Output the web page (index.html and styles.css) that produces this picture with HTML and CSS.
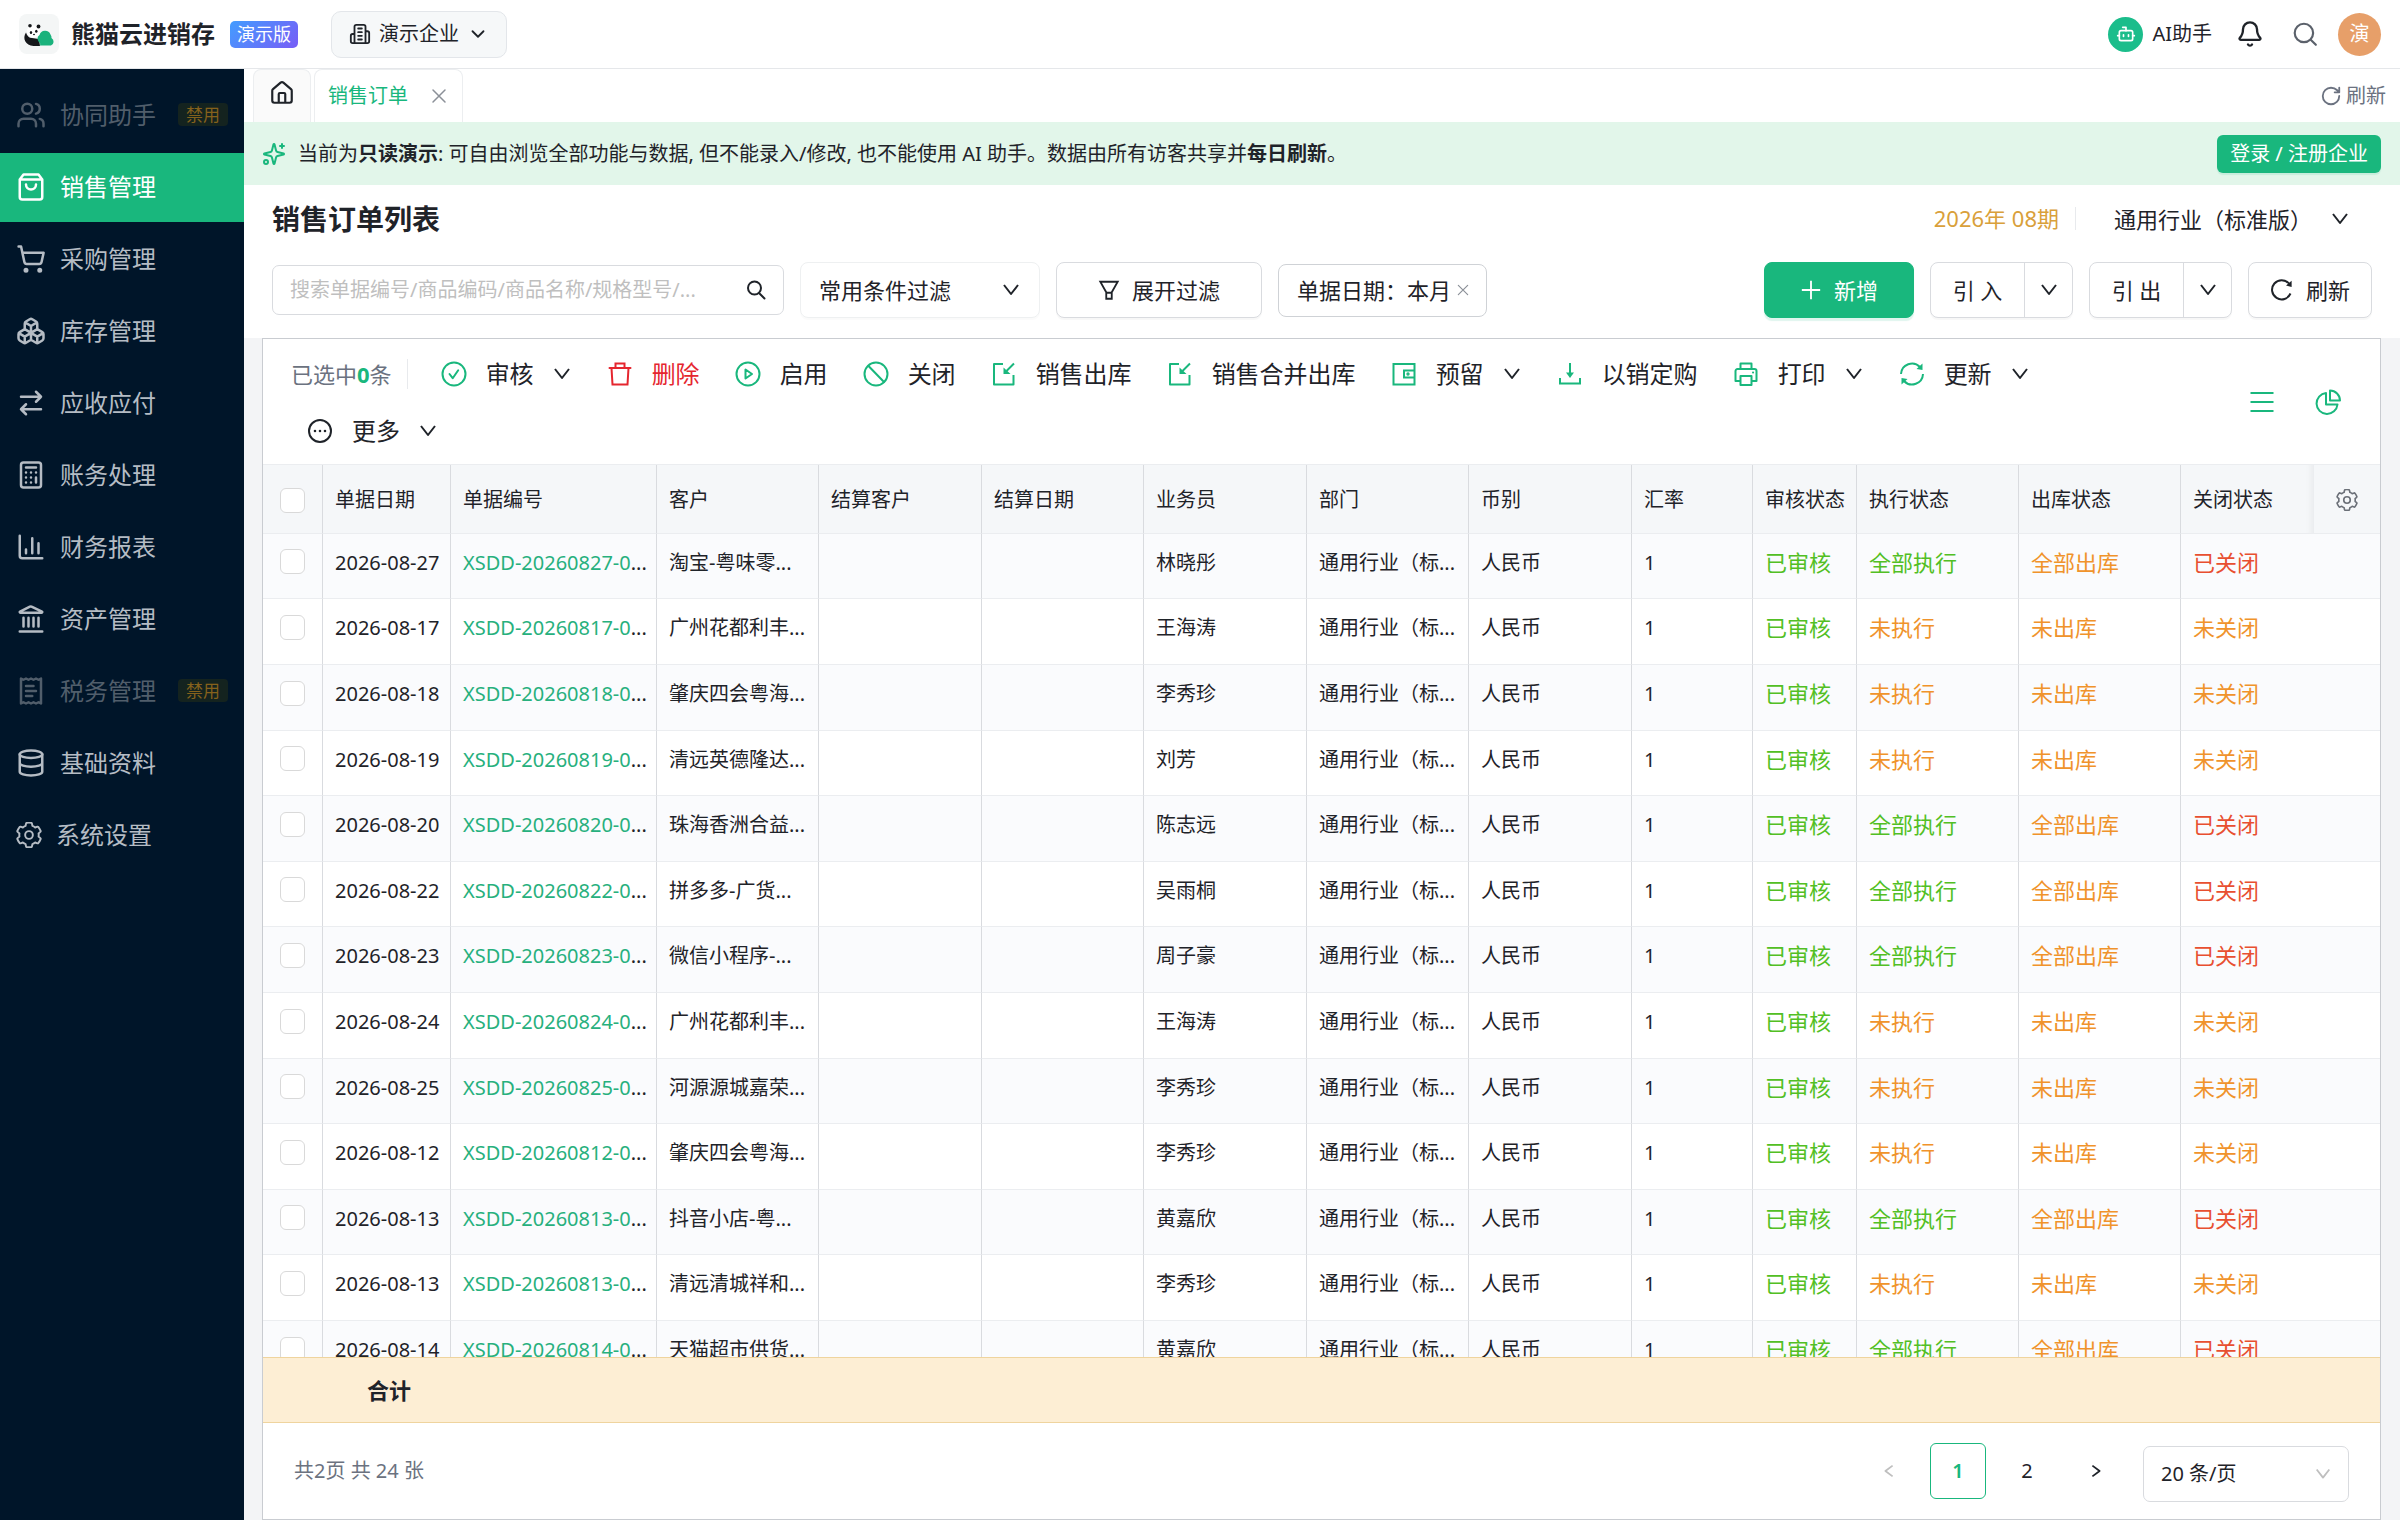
FILE: index.html
```html
<!DOCTYPE html>
<html lang="zh-CN">
<head>
<meta charset="utf-8">
<title>销售订单列表</title>
<link rel="stylesheet" href="styles.css">
</head>
<body>
<svg class="sprite" aria-hidden="true">
  <symbol id="users" viewBox="0 0 24 24"><path d="M16 21v-2a4 4 0 0 0-4-4H6a4 4 0 0 0-4 4v2M22 21v-2a4 4 0 0 0-3-3.87M16 3.13a4 4 0 0 1 0 7.75"/><circle cx="9" cy="7" r="4"/></symbol>
  <symbol id="bag" viewBox="0 0 24 24"><path d="M6 2 3 6v14a2 2 0 0 0 2 2h14a2 2 0 0 0 2-2V6l-3-4ZM3 6h18M16 10a4 4 0 0 1-8 0"/></symbol>
  <symbol id="cart" viewBox="0 0 24 24"><circle cx="8" cy="21" r="1"/><circle cx="19" cy="21" r="1"/><path d="M2.05 2.05h2l2.66 12.42a2 2 0 0 0 2 1.58h9.78a2 2 0 0 0 1.95-1.57l1.65-7.43H5.12"/></symbol>
  <symbol id="boxes" viewBox="0 0 24 24"><path d="M2.97 12.92A2 2 0 0 0 2 14.63v3.24a2 2 0 0 0 .97 1.71l3 1.8a2 2 0 0 0 2.06 0L12 19v-5.5l-5-3-4.03 2.42ZM7 16.5l-4.74-2.85M7 16.5l5-3M7 16.5v5.17M12 13.5V19l3.97 2.38a2 2 0 0 0 2.06 0l3-1.8a2 2 0 0 0 .97-1.71v-3.24a2 2 0 0 0-.97-1.71L17 10.5l-5 3ZM17 16.5l-5-3M17 16.5l4.74-2.85M17 16.5v5.17M7.97 4.42A2 2 0 0 0 7 6.13v4.37l5 3 5-3V6.13a2 2 0 0 0-.97-1.71l-3-1.8a2 2 0 0 0-2.06 0l-3 1.8ZM12 8 7.26 5.15M12 8l4.74-2.85M12 13.5V8"/></symbol>
  <symbol id="swap" viewBox="0 0 24 24"><path d="m16 3 4 4-4 4M20 7H4M8 21l-4-4 4-4M4 17h16"/></symbol>
  <symbol id="calc" viewBox="0 0 24 24"><rect x="4" y="2" width="16" height="20" rx="2"/><path d="M8 6h8M16 14v4M16 10h.01M12 10h.01M8 10h.01M12 14h.01M8 14h.01M12 18h.01M8 18h.01"/></symbol>
  <symbol id="chart" viewBox="0 0 24 24"><path d="M3 3v16a2 2 0 0 0 2 2h16M18 17V9M13 17V5M8 17v-3"/></symbol>
  <symbol id="bank" viewBox="0 0 24 24"><path d="M10 18v-7M11.12 2.198a2 2 0 0 1 1.76.006l7.866 3.847c.476.233.31.949-.22.949H3.474c-.53 0-.695-.716-.22-.949zM14 18v-7M18 18v-7M3 22h18M6 18v-7"/></symbol>
  <symbol id="receipt" viewBox="0 0 24 24"><path d="M4 2v20l2-1 2 1 2-1 2 1 2-1 2 1 2-1 2 1V2l-2 1-2-1-2 1-2-1-2 1-2-1-2 1ZM14 8H8M16 12H8M13 16H8"/></symbol>
  <symbol id="database" viewBox="0 0 24 24"><ellipse cx="12" cy="5" rx="9" ry="3"/><path d="M3 5V19A9 3 0 0 0 21 19V5M3 12A9 3 0 0 0 21 12"/></symbol>
  <symbol id="gear" viewBox="40 40 944 944"><path stroke-width="70" d="M924.8 625.7l-65.5-56c3.1-19 4.7-38.4 4.7-57.8s-1.6-38.8-4.7-57.8l65.5-56a32 32 0 0 0 9.3-35.2l-.9-2.6a443.7 443.7 0 0 0-79.7-137.9l-1.8-2.1a32.1 32.1 0 0 0-35.1-9.5l-81.3 28.9c-30-24.6-63.5-44-99.7-57.6l-15.7-85a32 32 0 0 0-25.8-25.7l-2.7-.5c-52.1-9.4-106.9-9.4-159 0l-2.7.5a32 32 0 0 0-25.8 25.7l-15.8 85.4a351.9 351.9 0 0 0-99 57.4l-81.9-29.1a32 32 0 0 0-35.1 9.5l-1.8 2.1a446 446 0 0 0-79.7 137.9l-.9 2.6c-4.5 12.5-.8 26.5 9.3 35.2l66.3 56.6c-3.1 18.8-4.6 38-4.6 57.1 0 19.2 1.5 38.4 4.6 57.1L99 625.5a32 32 0 0 0-9.3 35.2l.9 2.6c18.1 50.4 44.9 96.9 79.7 137.9l1.8 2.1a32.1 32.1 0 0 0 35.1 9.5l81.9-29.1c29.8 24.5 63.1 43.9 99 57.4l15.8 85.4a32 32 0 0 0 25.8 25.7l2.7.5a449.4 449.4 0 0 0 159 0l2.7-.5a32 32 0 0 0 25.8-25.7l15.7-85a350 350 0 0 0 99.7-57.6l81.3 28.9a32 32 0 0 0 35.1-9.5l1.8-2.1c34.8-41.1 61.6-87.5 79.7-137.9l.9-2.6c4.5-12.3.8-26.3-9.3-35z"/><circle cx="512" cy="512" r="140" stroke-width="70"/></symbol>
  <symbol id="building" viewBox="0 0 24 24"><path d="M6 22V4a2 2 0 0 1 2-2h8a2 2 0 0 1 2 2v18ZM6 12H4a2 2 0 0 0-2 2v6a2 2 0 0 0 2 2h2M18 9h2a2 2 0 0 1 2 2v9a2 2 0 0 1-2 2h-2M10 6h4M10 10h4M10 14h4M10 18h4"/></symbol>
  <symbol id="chevron" viewBox="0 0 24 24"><path d="m6 9 6 6 6-6"/></symbol>
  <symbol id="home" viewBox="0 0 24 24"><path d="M15 21v-8a1 1 0 0 0-1-1h-4a1 1 0 0 0-1 1v8M3 10a2 2 0 0 1 .709-1.528l7-5.999a2 2 0 0 1 2.582 0l7 5.999A2 2 0 0 1 21 10v9a2 2 0 0 1-2 2H5a2 2 0 0 1-2-2z"/></symbol>
  <symbol id="close" viewBox="0 0 24 24"><path d="M4 4l16 16M20 4 4 20"/></symbol>
  <symbol id="sparkles" viewBox="0 0 24 24"><path d="M9.937 15.5A2 2 0 0 0 8.5 14.063l-6.135-1.582a.5.5 0 0 1 0-.962L8.5 9.936A2 2 0 0 0 9.937 8.5l1.582-6.135a.5.5 0 0 1 .963 0L14.063 8.5A2 2 0 0 0 15.5 9.937l6.135 1.581a.5.5 0 0 1 0 .964L15.5 14.063a2 2 0 0 0-1.437 1.437l-1.582 6.135a.5.5 0 0 1-.963 0zM20 2v4M22 4h-4"/><circle cx="4" cy="20" r="2"/></symbol>
  <symbol id="bot" viewBox="0 0 24 24"><path d="M12 8V4H8M2 14h2M20 14h2M15 13v2M9 13v2"/><rect x="4" y="8" width="16" height="12" rx="2"/></symbol>
  <symbol id="bell" viewBox="0 0 24 24"><path d="M10.268 21a2 2 0 0 0 3.464 0M3.262 15.326A1 1 0 0 0 4 17h16a1 1 0 0 0 .74-1.673C19.41 13.956 18 12.499 18 8A6 6 0 0 0 6 8c0 4.499-1.411 5.956-2.738 7.326"/></symbol>
  <symbol id="search" viewBox="0 0 24 24"><circle cx="11" cy="11" r="8.5"/><path d="m17.5 17.5 4.5 4.5"/></symbol>
  <symbol id="magnify" viewBox="0 0 20 20"><circle cx="8.500" cy="8" r="6.500"/><path d="m13 13 5.500 5.500"/></symbol>
  <symbol id="rotate" viewBox="0 0 24 24"><path d="M21 12a9 9 0 1 1-9-9c2.52 0 4.93 1 6.74 2.74L21 8M21 3v5h-5"/></symbol>
  <symbol id="down" viewBox="0 0 20 20"><path stroke-linecap="butt" d="m3 5 7 9 7-9"/></symbol>
  <symbol id="left" viewBox="0 0 20 20"><path stroke-linecap="butt" d="M14 4 6 10l8 6"/></symbol>
  <symbol id="right" viewBox="0 0 20 20"><path stroke-linecap="butt" d="m6 4 8 6-8 6"/></symbol>
  <symbol id="filter" viewBox="0 0 24 24"><path stroke-linejoin="miter" d="M2.5 3h19L15 14.500V21.500H9V14.500ZM9 15h6"/></symbol>
  <symbol id="plus" viewBox="0 0 24 24"><path stroke-linecap="butt" d="M12 2v20M2 12h20"/></symbol>
  <symbol id="reload" viewBox="0 0 24 24"><path stroke-linecap="butt" d="M20.500 15.500A9.600 9.600 0 1 1 19 5.600"/><path fill="currentColor" stroke="none" d="M21.600 2.800v6.100l-5.600-1.300Z"/></symbol>
  <symbol id="t-check" viewBox="0 0 28 28"><circle cx="14" cy="14" r="11.500"/><path d="m9.500 14 3.200 4.200 5.500-8"/></symbol>
  <symbol id="t-trash" viewBox="0 0 28 28"><path stroke-linejoin="miter" d="M3.500 8h21M9.500 8V3.500h9V8M5.500 8l1 16.500h15l1-16.500"/></symbol>
  <symbol id="t-play" viewBox="0 0 28 28"><circle cx="14" cy="14" r="11.500"/><path d="M11.500 9.500v9l6.500-4.500Z"/></symbol>
  <symbol id="t-stop" viewBox="0 0 28 28"><circle cx="14" cy="14" r="11.500"/><path d="m6.500 6 15.500 16"/></symbol>
  <symbol id="t-import" viewBox="0 0 28 28"><path stroke-linecap="butt" d="M13 4H4v20.500h19.500V15M24 3.500l-7.500 7.500"/><path fill="currentColor" stroke="none" d="M13.500 7.500v6.500H20.500Z"/></symbol>
  <symbol id="t-wallet" viewBox="0 0 28 28"><path stroke-linejoin="miter" d="M3.500 4h21v20.500h-21ZM24.500 10.500H14v7h10.500"/><circle cx="18" cy="14" r=".7"/></symbol>
  <symbol id="t-download" viewBox="0 0 28 28"><path stroke-linecap="butt" stroke-linejoin="miter" d="M14 3v11M4 18v5.500h20V18"/><path fill="currentColor" stroke="none" d="M10 12.500h8L14 18Z"/></symbol>
  <symbol id="t-print" viewBox="0 0 28 28"><path d="M8.500 9V3.500h11V9M8.500 21H3.500V11a2 2 0 0 1 2-2h17a2 2 0 0 1 2 2v10h-5M8.500 16h11v9h-11ZM21 12.500h.1"/></symbol>
  <symbol id="t-sync" viewBox="0 0 28 28"><path stroke-linecap="butt" d="M3 14A11 11 0 0 1 22 7M25 14A11 11 0 0 1 6 21"/><path fill="currentColor" stroke="none" d="M24.500 3.500V10l-6-1ZM3.500 24.500V18l6 1Z"/></symbol>
  <symbol id="t-more" viewBox="0 0 28 28"><circle cx="14" cy="14" r="11"/><path stroke-width="2.600" d="M9 14h.01M14 14h.01M19 14h.01"/></symbol>
  <symbol id="t-menu" viewBox="0 0 28 28"><path stroke-linecap="butt" d="M2.500 5h23M2.500 14h23M2.500 23h23"/></symbol>
  <symbol id="t-pie" viewBox="0 0 28 28"><path d="M12 5a10.500 10.500 0 1 0 11.500 11.500H12ZM16 2.500V12.500h10A10 10 0 0 0 16 2.500Z"/></symbol>
  <symbol id="panda" viewBox="0 0 40 40"><path fill="#15171a" stroke="none" d="M7 18.500c-4 6-.5 13 7.500 13.500h6.500l-1-7-7-1c-3 0-5-2-6-5.500Z"/><path fill="#1ab27c" stroke="none" d="M20.500 31.500c1.500-1 .5-3-1-4a4.500 4.500 0 0 1 1-6.500 5.800 5.800 0 0 1 11-.5 4.500 4.500 0 0 1 1 3.500 4.200 4.200 0 0 1-.5 7.500Z"/><ellipse cx="14.500" cy="17.500" rx="6.600" ry="6" fill="#fff" stroke="none"/><g fill="#15171a" stroke="none"><circle cx="11" cy="11.800" r="1.800"/><circle cx="19.500" cy="12.500" r="1.900"/><ellipse cx="12" cy="18.500" rx="1.200" ry="1.600"/><ellipse cx="17.300" cy="17.300" rx="1.200" ry="1.500"/><ellipse cx="15" cy="20.500" rx="1" ry=".7"/></g></symbol>
</svg>

<header class="topbar">
  <svg class="logo"><use href="#panda"/></svg>
  <strong class="brand">熊猫云进销存</strong>
  <span class="edition">演示版</span>
  <button class="company" type="button"><svg class="i22"><use href="#building"/></svg>演示企业<svg class="i22"><use href="#chevron"/></svg></button>
  <div class="top-actions">
    <button class="ai" type="button"><span class="ai-dot"><svg class="i20"><use href="#bot"/></svg></span>AI助手</button>
    <button class="plain" type="button" aria-label="通知"><svg class="i28"><use href="#bell"/></svg></button>
    <button class="plain muted" type="button" aria-label="搜索"><svg class="i26"><use href="#search"/></svg></button>
    <button class="avatar" type="button">演</button>
  </div>
</header>

<div class="shell">
  <nav class="sidebar">
    <a href="#" class="disabled"><svg class="i30"><use href="#users"/></svg><span>协同助手</span><em>禁用</em></a>
    <a href="#" class="active"><svg class="i30"><use href="#bag"/></svg><span>销售管理</span></a>
    <a href="#"><svg class="i30"><use href="#cart"/></svg><span>采购管理</span></a>
    <a href="#"><svg class="i30"><use href="#boxes"/></svg><span>库存管理</span></a>
    <a href="#"><svg class="i30"><use href="#swap"/></svg><span>应收应付</span></a>
    <a href="#"><svg class="i30"><use href="#calc"/></svg><span>账务处理</span></a>
    <a href="#"><svg class="i30"><use href="#chart"/></svg><span>财务报表</span></a>
    <a href="#"><svg class="i30"><use href="#bank"/></svg><span>资产管理</span></a>
    <a href="#" class="disabled"><svg class="i30"><use href="#receipt"/></svg><span>税务管理</span><em>禁用</em></a>
    <a href="#"><svg class="i30"><use href="#database"/></svg><span>基础资料</span></a>
    <a href="#"><svg class="i26"><use href="#gear"/></svg><span>系统设置</span></a>
  </nav>

  <main class="main">
    <div class="tabs">
      <a href="#" class="tab-home" aria-label="首页"><svg class="i26"><use href="#home"/></svg></a>
      <div class="tab"><a href="#">销售订单</a><button class="plain" type="button" aria-label="关闭"><svg class="i18"><use href="#close"/></svg></button></div>
      <button class="tab-refresh" type="button"><svg class="i22"><use href="#rotate"/></svg>刷新</button>
    </div>

    <div class="notice">
      <svg class="i24"><use href="#sparkles"/></svg>
      <p>当前为<b>只读演示</b>: 可自由浏览全部功能与数据, 但不能录入/修改, 也不能使用 AI 助手。数据由所有访客共享并<b>每日刷新</b>。</p>
      <button class="login" type="button">登录 / 注册企业</button>
    </div>

    <section class="head">
      <div class="head-row">
        <h1>销售订单列表</h1>
        <span class="period">2026年 08期</span>
        <label class="industry"><select aria-label="行业"><option>通用行业（标准版）</option></select><svg class="i20"><use href="#down"/></svg></label>
      </div>
      <div class="filters">
        <label class="search"><input type="text" aria-label="搜索" placeholder="搜索单据编号/商品编码/商品名称/规格型号/..."><svg class="i20"><use href="#magnify"/></svg></label>
        <label class="preset"><select aria-label="常用条件过滤"><option>常用条件过滤</option></select><svg class="i20"><use href="#down"/></svg></label>
        <button class="btn expand" type="button"><svg class="i22"><use href="#filter"/></svg>展开过滤</button>
        <span class="chip">单据日期：本月<button class="plain" type="button" aria-label="移除"><svg class="i14"><use href="#close"/></svg></button></span>
        <div class="actions">
          <button class="btn primary" type="button"><svg class="i22"><use href="#plus"/></svg>新增</button>
          <div class="split"><button type="button">引 入</button><button type="button" aria-label="更多引入"><svg class="i20"><use href="#down"/></svg></button></div>
          <div class="split"><button type="button">引 出</button><button type="button" aria-label="更多引出"><svg class="i20"><use href="#down"/></svg></button></div>
          <button class="btn reload" type="button"><svg class="i24"><use href="#reload"/></svg>刷新</button>
        </div>
      </div>
    </section>

    <div class="body">
      <section class="card">
        <div class="toolbar">
          <div class="tools">
            <span class="count">已选中<b>0</b>条</span>
            <button type="button"><svg class="i28"><use href="#t-check"/></svg>审核<svg class="i20"><use href="#down"/></svg></button>
            <button type="button" class="danger"><svg class="i28"><use href="#t-trash"/></svg>删除</button>
            <button type="button"><svg class="i28"><use href="#t-play"/></svg>启用</button>
            <button type="button"><svg class="i28"><use href="#t-stop"/></svg>关闭</button>
            <button type="button"><svg class="i28"><use href="#t-import"/></svg>销售出库</button>
            <button type="button"><svg class="i28"><use href="#t-import"/></svg>销售合并出库</button>
            <button type="button"><svg class="i28"><use href="#t-wallet"/></svg>预留<svg class="i20"><use href="#down"/></svg></button>
            <button type="button"><svg class="i28"><use href="#t-download"/></svg>以销定购</button>
            <button type="button"><svg class="i28"><use href="#t-print"/></svg>打印<svg class="i20"><use href="#down"/></svg></button>
            <button type="button"><svg class="i28"><use href="#t-sync"/></svg>更新<svg class="i20"><use href="#down"/></svg></button>
            <button type="button" class="more"><svg class="i28"><use href="#t-more"/></svg>更多<svg class="i20"><use href="#down"/></svg></button>
          </div>
          <div class="views">
            <button class="plain" type="button" aria-label="列表"><svg class="i28"><use href="#t-menu"/></svg></button>
            <button class="plain" type="button" aria-label="图表"><svg class="i28"><use href="#t-pie"/></svg></button>
          </div>
        </div>

        <div class="table-wrap">
          <table>
            <colgroup><col class="c-check"><col class="c-date"><col class="c-no"><col class="c-std"><col class="c-wide"><col class="c-std"><col class="c-wide"><col class="c-std"><col class="c-wide"><col class="c-rate"><col class="c-audit"><col class="c-std"><col class="c-std"><col><col class="c-set"></colgroup>
            <thead><tr><th><input type="checkbox" aria-label="全选"></th><th>单据日期</th><th>单据编号</th><th>客户</th><th>结算客户</th><th>结算日期</th><th>业务员</th><th>部门</th><th>币别</th><th>汇率</th><th>审核状态</th><th>执行状态</th><th>出库状态</th><th>关闭状态</th><th><button class="plain" type="button" aria-label="列设置"><svg class="i22"><use href="#gear"/></svg></button></th></tr></thead>
            <tbody>
              <tr><td><input type="checkbox" aria-label="选择"></td><td>2026-08-27</td><td><a href="#">XSDD-20260827-0</a>...</td><td>淘宝-粤味零...</td><td></td><td></td><td>林晓彤</td><td>通用行业（标...</td><td>人民币</td><td>1</td><td class="ok">已审核</td><td class="ok">全部执行</td><td class="warn">全部出库</td><td class="bad" colspan="2">已关闭</td></tr>
              <tr><td><input type="checkbox" aria-label="选择"></td><td>2026-08-17</td><td><a href="#">XSDD-20260817-0</a>...</td><td>广州花都利丰...</td><td></td><td></td><td>王海涛</td><td>通用行业（标...</td><td>人民币</td><td>1</td><td class="ok">已审核</td><td class="warn">未执行</td><td class="warn">未出库</td><td class="warn" colspan="2">未关闭</td></tr>
              <tr><td><input type="checkbox" aria-label="选择"></td><td>2026-08-18</td><td><a href="#">XSDD-20260818-0</a>...</td><td>肇庆四会粤海...</td><td></td><td></td><td>李秀珍</td><td>通用行业（标...</td><td>人民币</td><td>1</td><td class="ok">已审核</td><td class="warn">未执行</td><td class="warn">未出库</td><td class="warn" colspan="2">未关闭</td></tr>
              <tr><td><input type="checkbox" aria-label="选择"></td><td>2026-08-19</td><td><a href="#">XSDD-20260819-0</a>...</td><td>清远英德隆达...</td><td></td><td></td><td>刘芳</td><td>通用行业（标...</td><td>人民币</td><td>1</td><td class="ok">已审核</td><td class="warn">未执行</td><td class="warn">未出库</td><td class="warn" colspan="2">未关闭</td></tr>
              <tr><td><input type="checkbox" aria-label="选择"></td><td>2026-08-20</td><td><a href="#">XSDD-20260820-0</a>...</td><td>珠海香洲合益...</td><td></td><td></td><td>陈志远</td><td>通用行业（标...</td><td>人民币</td><td>1</td><td class="ok">已审核</td><td class="ok">全部执行</td><td class="warn">全部出库</td><td class="bad" colspan="2">已关闭</td></tr>
              <tr><td><input type="checkbox" aria-label="选择"></td><td>2026-08-22</td><td><a href="#">XSDD-20260822-0</a>...</td><td>拼多多-广货...</td><td></td><td></td><td>吴雨桐</td><td>通用行业（标...</td><td>人民币</td><td>1</td><td class="ok">已审核</td><td class="ok">全部执行</td><td class="warn">全部出库</td><td class="bad" colspan="2">已关闭</td></tr>
              <tr><td><input type="checkbox" aria-label="选择"></td><td>2026-08-23</td><td><a href="#">XSDD-20260823-0</a>...</td><td>微信小程序-...</td><td></td><td></td><td>周子豪</td><td>通用行业（标...</td><td>人民币</td><td>1</td><td class="ok">已审核</td><td class="ok">全部执行</td><td class="warn">全部出库</td><td class="bad" colspan="2">已关闭</td></tr>
              <tr><td><input type="checkbox" aria-label="选择"></td><td>2026-08-24</td><td><a href="#">XSDD-20260824-0</a>...</td><td>广州花都利丰...</td><td></td><td></td><td>王海涛</td><td>通用行业（标...</td><td>人民币</td><td>1</td><td class="ok">已审核</td><td class="warn">未执行</td><td class="warn">未出库</td><td class="warn" colspan="2">未关闭</td></tr>
              <tr><td><input type="checkbox" aria-label="选择"></td><td>2026-08-25</td><td><a href="#">XSDD-20260825-0</a>...</td><td>河源源城嘉荣...</td><td></td><td></td><td>李秀珍</td><td>通用行业（标...</td><td>人民币</td><td>1</td><td class="ok">已审核</td><td class="warn">未执行</td><td class="warn">未出库</td><td class="warn" colspan="2">未关闭</td></tr>
              <tr><td><input type="checkbox" aria-label="选择"></td><td>2026-08-12</td><td><a href="#">XSDD-20260812-0</a>...</td><td>肇庆四会粤海...</td><td></td><td></td><td>李秀珍</td><td>通用行业（标...</td><td>人民币</td><td>1</td><td class="ok">已审核</td><td class="warn">未执行</td><td class="warn">未出库</td><td class="warn" colspan="2">未关闭</td></tr>
              <tr><td><input type="checkbox" aria-label="选择"></td><td>2026-08-13</td><td><a href="#">XSDD-20260813-0</a>...</td><td>抖音小店-粤...</td><td></td><td></td><td>黄嘉欣</td><td>通用行业（标...</td><td>人民币</td><td>1</td><td class="ok">已审核</td><td class="ok">全部执行</td><td class="warn">全部出库</td><td class="bad" colspan="2">已关闭</td></tr>
              <tr><td><input type="checkbox" aria-label="选择"></td><td>2026-08-13</td><td><a href="#">XSDD-20260813-0</a>...</td><td>清远清城祥和...</td><td></td><td></td><td>李秀珍</td><td>通用行业（标...</td><td>人民币</td><td>1</td><td class="ok">已审核</td><td class="warn">未执行</td><td class="warn">未出库</td><td class="warn" colspan="2">未关闭</td></tr>
              <tr><td><input type="checkbox" aria-label="选择"></td><td>2026-08-14</td><td><a href="#">XSDD-20260814-0</a>...</td><td>天猫超市供货...</td><td></td><td></td><td>黄嘉欣</td><td>通用行业（标...</td><td>人民币</td><td>1</td><td class="ok">已审核</td><td class="ok">全部执行</td><td class="warn">全部出库</td><td class="bad" colspan="2">已关闭</td></tr>
            </tbody>
          </table>
        </div>

        <div class="summary">合计</div>

        <footer class="pager">
          <span class="total">共2页 共 24 张</span>
          <button class="page off" type="button" aria-label="上一页"><svg class="i18"><use href="#left"/></svg></button>
          <button class="page current" type="button">1</button>
          <button class="page" type="button">2</button>
          <button class="page" type="button" aria-label="下一页"><svg class="i18"><use href="#right"/></svg></button>
          <label class="size"><select aria-label="每页条数"><option>20 条/页</option></select><svg class="i18"><use href="#down"/></svg></label>
        </footer>
      </section>
    </div>
  </main>
</div>
</body>
</html>
```
FILE: styles.css
```css
:root {
  --green: #19b77d;
  --ink: #1f2329;
  --muted: #6b7280;
  --line: #d9dbdf;
}

* { box-sizing: border-box; }

body {
  margin: 0;
  height: 100vh;
  display: flex;
  flex-direction: column;
  overflow: hidden;
  font: 20px/28px "Noto Sans", "Noto Sans CJK SC", sans-serif;
  color: var(--ink);
  background: #fff;
}

button, input, select { font: inherit; color: inherit; margin: 0; }
button { cursor: pointer; padding: 0; border: 0; background: none; white-space: nowrap; }
a { color: inherit; text-decoration: none; }
label { cursor: pointer; }

svg {
  flex: none;
  fill: none;
  stroke: currentColor;
  stroke-width: 2;
  stroke-linecap: round;
  stroke-linejoin: round;
}
.sprite { display: none; }
.i14 { width: 14px; height: 14px; }
.i18 { width: 18px; height: 18px; }
.i20 { width: 20px; height: 20px; }
.i22 { width: 22px; height: 22px; }
.i24 { width: 24px; height: 24px; }
.i26 { width: 26px; height: 26px; }
.i28 { width: 28px; height: 28px; }
.i30 { width: 30px; height: 30px; }

.plain { display: flex; align-items: center; justify-content: center; }

select {
  appearance: none;
  border: 0;
  background: none;
  outline: 0;
  padding: 0;
  flex: 1;
  min-width: 0;
}

/* top bar */
.topbar {
  flex: none;
  height: 69px;
  display: flex;
  align-items: center;
  padding: 0 19px;
  border-bottom: 1px solid #e5e7ea;
}
.logo { width: 40px; height: 40px; border-radius: 8px; background: #f4f6f6; }
.brand { margin-left: 12px; font-size: 24px; }
.edition {
  margin-left: 15px;
  height: 27px;
  padding: 0 7px;
  border-radius: 5px;
  font-size: 18px;
  line-height: 27px;
  color: #fff;
  background: linear-gradient(135deg, #439dff, #775cf6);
}
.company {
  display: flex;
  align-items: center;
  gap: 8px;
  height: 47px;
  margin-left: 33px;
  padding: 0 17px;
  border: 1px solid #e3e6ea;
  border-radius: 10px;
  background: #f6f8f9;
}
.top-actions { display: flex; align-items: center; margin-left: auto; }
.ai { display: flex; align-items: center; gap: 9px; }
.ai-dot {
  display: flex;
  align-items: center;
  justify-content: center;
  width: 35px;
  height: 35px;
  border-radius: 50%;
  color: #fff;
  background: #1bbd8b;
}
.top-actions .plain { margin-left: 24px; }
.top-actions .muted { margin-left: 28px; color: #5b616b; }
.avatar {
  width: 43px;
  height: 43px;
  margin-left: 20px;
  border-radius: 50%;
  color: #fff;
  background: #e79f69;
}

/* shell */
.shell { flex: 1; min-height: 0; display: flex; }
.sidebar {
  flex: none;
  width: 244px;
  padding-top: 12px;
  display: flex;
  flex-direction: column;
  gap: 3px;
  background: #001529;
}
.sidebar a {
  display: flex;
  align-items: center;
  gap: 14px;
  height: 69px;
  padding: 0 16px 2px;
  font-size: 24px;
  color: #b5bcc4;
}
.sidebar .active { color: #fff; background: var(--green); }
.sidebar .disabled { color: #515e6b; }
.sidebar em {
  margin-left: auto;
  height: 23px;
  padding: 0 8px;
  border-radius: 4px;
  font-size: 17px;
  font-style: normal;
  line-height: 23px;
  color: #85611c;
  background: #14231f;
}

.main { flex: 1; min-width: 0; display: flex; flex-direction: column; }

/* tabs */
.tabs { flex: none; height: 53px; display: flex; padding: 0 14px 0 9px; gap: 3px; }
.tab-home, .tab {
  display: flex;
  align-items: center;
  justify-content: center;
  border: 1px solid #eceef0;
  border-bottom: 0;
  border-radius: 8px 8px 0 0;
}
.tab-home { width: 58px; padding-bottom: 6px; background: #fafafa; }
.tab { gap: 22px; padding: 0 14px 0 13px; color: var(--green); }
.tab .plain { color: #8b9098; }
.tab-refresh { display: flex; align-items: center; gap: 4px; margin-left: auto; color: var(--muted); }

/* notice */
.notice {
  flex: none;
  display: flex;
  align-items: center;
  height: 63px;
  padding: 0 19px 0 18px;
  background: #e2f6ea;
}
.notice svg { color: var(--green); }
.notice p { margin: 0 auto 0 12px; }
.login {
  height: 38px;
  padding: 0 13px;
  border-radius: 6px;
  color: #fff;
  background: var(--green);
  box-shadow: 0 2px 1px #19b77d22;
}

/* page head */
.head { flex: none; padding: 0 28px 20px; }
.head-row { display: flex; align-items: center; height: 77px; padding-bottom: 10px; font-size: 22px; }
h1 { margin: 0 auto 0 0; font-size: 28px; line-height: 36px; }
.period { padding-right: 16px; line-height: 23px; border-right: 1px solid #e8eaed; color: #d9a03a; }
.industry { display: flex; align-items: center; width: 258px; margin-left: 38px; padding-right: 22px; }

.filters { display: flex; align-items: center; gap: 16px; height: 56px; font-size: 22px; }
.search {
  display: flex;
  align-items: center;
  width: 512px;
  height: 50px;
  padding: 0 17px;
  border: 1px solid var(--line);
  border-radius: 7px;
  font-size: 20px;
}
.search input { flex: 1; min-width: 0; padding: 0; border: 0; outline: 0; background: none; }
.search input::placeholder { color: #bfbfbf; opacity: 1; }
.preset {
  display: flex;
  align-items: center;
  width: 240px;
  height: 56px;
  padding: 0 18px;
  border: 1px solid #eef0f1;
  border-radius: 8px;
  box-shadow: 0 2px 1px #00000005;
}
.btn, .split {
  display: flex;
  align-items: center;
  justify-content: center;
  height: 56px;
  border: 1px solid var(--line);
  border-radius: 8px;
  background: #fff;
  box-shadow: 0 2px 1px #00000008;
}
.btn { gap: 12px; }
.expand { width: 206px; }
.chip {
  display: flex;
  align-items: center;
  gap: 5px;
  height: 53px;
  padding: 0 16px 0 18px;
  border: 1px solid #cfd2d6;
  border-radius: 8px;
}
.chip .plain { color: #8b9098; }
.actions { display: flex; gap: 16px; margin-left: auto; }
.primary { width: 150px; color: #fff; border-color: var(--green); background: var(--green); box-shadow: 0 3px 1px #19b77d22; }
.split button { height: 100%; width: 47px; display: flex; align-items: center; justify-content: center; }
.split button:first-child { width: 94px; white-space: pre; border-right: 1px solid var(--line); }
.reload { width: 124px; }

/* card */
.body { flex: 1; min-height: 0; display: flex; padding: 0 19px 0 18px; background: #f3f4f6; }
.card {
  flex: 1;
  min-width: 0;
  display: flex;
  flex-direction: column;
  border: 1px solid #c9ccd1;
  background: #fff;
}
.toolbar { flex: none; display: flex; align-items: center; gap: 80px; padding: 6px 38px 5px 26px; border-bottom: 1px solid #ebedf0; }
.tools { flex: 1; display: flex; flex-wrap: wrap; align-items: center; }
.count {
  height: 30px;
  margin-right: 15px;
  padding: 0 15px 0 2px;
  border-right: 1px solid #e8eaed;
  font-size: 22px;
  line-height: 30px;
  color: var(--muted);
}
.count b { color: var(--green); }
.tools button {
  display: flex;
  align-items: center;
  gap: 18px;
  height: 57px;
  padding: 0 17px;
  font-size: 24px;
}
.tools .i28, .views { color: var(--green); }
.tools .danger, .tools .danger .i28 { color: #e5262f; }
.tools .more .i28 { color: var(--ink); }
.views { display: flex; gap: 38px; }

/* table */
.table-wrap { flex: 1; min-height: 0; overflow: hidden; }
table { width: 100%; table-layout: fixed; border-collapse: separate; border-spacing: 0; }
.c-check { width: 60px; }
.c-date { width: 128px; }
.c-no { width: 206px; }
.c-std { width: 162px; }
.c-wide { width: 163px; }
.c-rate { width: 121px; }
.c-audit { width: 104px; }
.c-set { width: 66px; }
th, td {
  padding: 0 0 0 12px;
  text-align: left;
  font-weight: 400;
  white-space: nowrap;
  overflow: hidden;
  border-right: 1px solid var(--line);
  border-bottom: 1px solid #ebedf0;
}
th { height: 69px; padding-top: 2px; background: #f5f7f9; }
th:last-child, td:last-child { border-right: 0; }
th:nth-child(14) { border-right-color: #ebedf0; box-shadow: inset -8px 0 6px -6px #0000000d; }
th .plain { width: 42px; color: #6b7078; }
td { height: 66px; padding-bottom: 7px; }
tr:nth-child(5n+1) td, tr:nth-child(5n+4) td { height: 65px; }
tbody tr:nth-child(odd) { background: #fafbfd; }
th:first-child, td:first-child { padding-left: 17px; }
td:first-child { padding-bottom: 9px; }
td a { color: #27b07d; }
input[type="checkbox"] {
  appearance: none;
  display: block;
  width: 25px;
  height: 25px;
  border: 1px solid #d9d9d9;
  border-radius: 6px;
  background: #fff;
}
td.ok, td.warn, td.bad { padding-bottom: 9px; font-size: 22px; }
.ok { color: #52bf24; }
.warn { color: #f0932b; }
.bad { color: #e84f30; }

.summary {
  flex: none;
  height: 66px;
  padding-left: 104px;
  border-top: 1px solid #efd49e;
  border-bottom: 1px solid #efd49e;
  font-size: 22px;
  font-weight: 700;
  line-height: 64px;
  background: #fdeed4;
}

/* pager */
.pager { flex: none; display: flex; align-items: center; height: 96px; padding: 0 31px; }
.total { margin-right: auto; color: var(--muted); }
.page {
  display: flex;
  align-items: center;
  justify-content: center;
  width: 56px;
  height: 56px;
  margin-right: 13px;
  border-radius: 6px;
}
.off { color: #bfbfbf; }
.current { border: 1px solid var(--green); color: var(--green); font-weight: 600; }
.size {
  display: flex;
  align-items: center;
  width: 206px;
  height: 56px;
  margin: 5px 0 0 6px;
  padding: 0 16px 0 17px;
  border: 1px solid var(--line);
  border-radius: 7px;
}
.size svg { color: #bfbfbf; }
```
